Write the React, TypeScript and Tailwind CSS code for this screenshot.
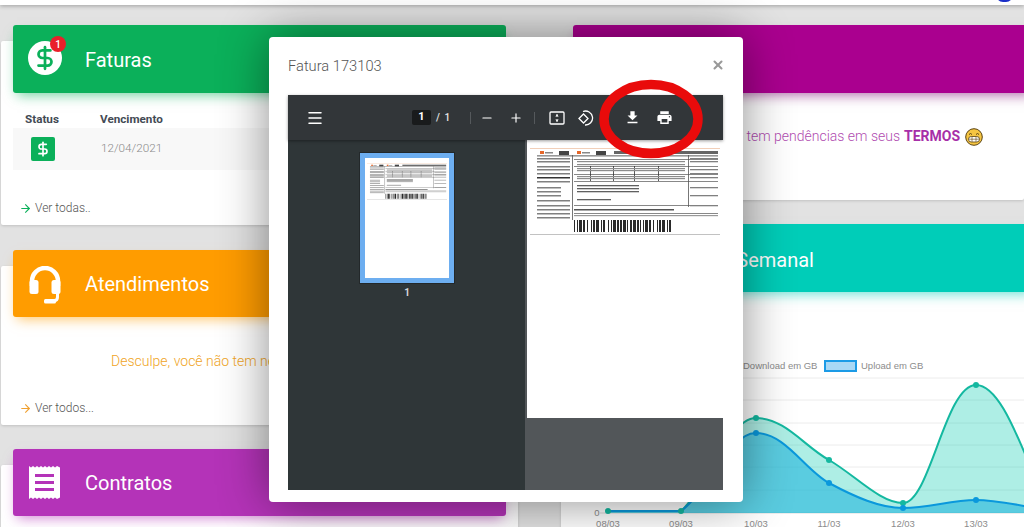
import React from 'react';
import { ArrowRight, DollarSign, Menu, Minus, Plus, X } from 'lucide-react';

const BAR_WIDTHS = [1, 2, 1, 1, 3, 1, 2, 2, 1, 3, 1, 1, 2, 1, 3, 2, 1, 1, 2, 3, 1, 2, 1, 1, 3, 1, 2, 1, 2, 1, 3, 1, 1, 2, 2, 1, 3, 1, 2, 1, 1, 2, 1, 1, 3, 1, 2, 2, 1, 3, 1, 1, 2, 1, 3, 2, 1, 1, 2, 3];

const Boleto: React.FC<{ className: string }> = ({ className }) => {
  let x = 44;
  const bars = BAR_WIDTHS.map((w, i) => {
    const bar = i % 2 === 0 ? <rect key={i} x={x} y={73} width={w} height={12} fill="#2a2a2a" /> : null;
    x += w;
    return bar;
  });
  const hLines = [12, 19, 27, 34, 58, 66];

  return (
    <svg viewBox="0 0 190 90" className={className}>
      <rect x="0" y="1" width="190" height="0.6" fill="#e8b08a" />
      <rect x="10" y="4" width="4" height="3" fill="#e5672a" />
      <rect x="15" y="5" width="8" height="1.5" fill="#888" />
      <rect x="29" y="4" width="10" height="4" fill="#444" />
      <rect x="47" y="4" width="4" height="3" fill="#e5672a" />
      <rect x="52" y="5" width="8" height="1.5" fill="#888" />
      <rect x="66" y="4" width="10" height="4" fill="#444" />
      <rect x="84" y="4" width="104" height="3" fill="#666" />
      <rect x="7" y="8.500" width="181" height="0.8" fill="#333" />
      <rect x="42" y="8" width="0.8" height="65" fill="#555" />
      <rect x="158" y="8" width="0.8" height="52" fill="#555" />
      {hLines.map((y) => (
        <rect key={y} x="44" y={y} width="144" height="0.7" fill="#555" />
      ))}
      {[60, 83, 104, 128].map((lx) => (
        <rect key={lx} x={lx} y="19" width="0.8" height="15" fill="#333" />
      ))}
      {[11, 14, 19, 22, 26, 30, 34, 40, 44, 48, 53, 58, 62, 66, 70].map((y) => (
        <rect key={y} x="7" y={y} width={y % 4 === 0 ? 24 : 33} height="1.500" fill={y === 30 ? '#333' : '#808080'} />
      ))}
      {[11, 14, 22, 26, 30, 40, 48, 58].map((y) => (
        <rect key={y} x="160" y={y} width="28" height="1.300" fill="#808080" />
      ))}
      {[14, 17, 21, 23, 29, 31].map((y) => (
        <rect key={y} x="47" y={y} width="108" height="1.200" fill="#8c8c8c" />
      ))}
      {[38, 41, 44, 52].map((y) => (
        <rect key={y} x="47" y={y} width={y === 52 ? 34 : 62} height="1.300" fill="#606060" />
      ))}
      <rect x="44" y="62" width="100" height="1.500" fill="#555" />
      <rect x="44" y="68" width="144" height="1.200" fill="#999" />
      {bars}
      <rect x="0" y="87" width="190" height="0.6" fill="#999" />
    </svg>
  );
};

const HeadsetIcon = () => (
  <svg viewBox="0 0 32 38" className="w-[32px] h-[38px]" fill="none">
    <path d="M3 20V15a13 13 0 0 1 26 0v5" stroke="#fff" strokeWidth="4.500" />
    <path d="M28.500 25v6c0 2.500-1 3.500-3 3.500H20" stroke="#fff" strokeWidth="3" />
    <rect x="0.500" y="14" width="9" height="14" rx="2.500" fill="#fff" />
    <rect x="22.500" y="14" width="9" height="14" rx="2.500" fill="#fff" />
    <rect x="15" y="33" width="12" height="4.500" rx="1.500" fill="#fff" />
  </svg>
);

const ReceiptIcon = () => (
  <svg viewBox="0 0 31 33" className="w-[31px] h-[33px]">
    <path
      fill="#fff"
      fillRule="evenodd"
      d="M0 0l2 1.500L4 0l2 1.500L8 0l2 1.500L12 0l2 1.500L16 0l2 1.500L20 0l2 1.500L24 0l2 1.500L28 0l3 1.500V31.500L28 33l-2-1.500L24 33l-2-1.500L20 33l-2-1.500L16 33l-2-1.500L12 33l-2-1.500L8 33l-2-1.500L4 33l-2-1.500L0 33zM6 8v3h19V8zM6 15v3h19v-3zM6 22v3h19v-3z"
    />
  </svg>
);

const GrinEmoji = () => (
  <svg viewBox="0 0 18 18" className="w-[18px] h-[18px] ml-[5px] shrink-0">
    <circle cx="9" cy="9" r="8.300" fill="#f5c542" stroke="#5a4210" strokeWidth="1" />
    <rect x="3.500" y="8.500" width="11" height="5.500" rx="2.700" fill="#fff" stroke="#5a4210" strokeWidth="0.800" />
    <path d="M3.500 11.200h11M7 8.700v5.200M11 8.700v5.200" stroke="#5a4210" strokeWidth="0.600" />
    <path d="M4 6.500q1.500-2 3 0M11 6.500q1.500-2 3 0" stroke="#5a4210" strokeWidth="1" fill="none" />
  </svg>
);

const Chart = () => {
  const teal = 'M608 511 L681 511 C705 490 728 418 756 418 C785 418 805 447 829 460 C855 475 880 503 903 503 C930 503 945 385 976 385 C1007 385 1030 480 1050 505';
  const blue = 'M608 511 L681 511 C705 495 728 433 756 433 C785 433 805 470 829 483 C855 497 880 508 903 508 C930 508 950 500 976 500 C1000 500 1030 508 1050 510';
  const gridY = [378, 400, 423, 445, 467, 490];
  const ticks: [string, number][] = [['08/03', 608], ['09/03', 681], ['10/03', 756], ['11/03', 829], ['12/03', 903], ['13/03', 976]];

  return (
    <svg viewBox="561 350 463 177" className="w-[463px] h-[177px] mt-[58px] block" fontFamily="Liberation Sans, sans-serif">
      <text x="743" y="369" fontSize="9.500" fill="#8c8c8c">Download em GB</text>
      <rect x="825" y="361" width="31" height="10" fill="#a9d8f5" stroke="#1c9be6" strokeWidth="2" />
      <text x="861" y="369" fontSize="9.500" fill="#8c8c8c">Upload em GB</text>
      {gridY.map((y) => (
        <line key={y} x1="600" x2="1024" y1={y} y2={y} stroke="#ececec" />
      ))}
      <line x1="600" x2="1024" y1="513" y2="513" stroke="#dcdcdc" />
      <path d={`${teal} L1050 513 L608 513 Z`} fill="#16cdb5" fillOpacity="0.35" />
      <path d={`${blue} L1050 513 L608 513 Z`} fill="#16b0dc" fillOpacity="0.55" />
      <path d={teal} fill="none" stroke="#14b8a0" strokeWidth="2" />
      <path d={blue} fill="none" stroke="#0a98dc" strokeWidth="2" />
      {[[608, 511], [681, 511], [756, 418], [829, 460], [903, 503], [976, 385]].map(([cx, cy]) => (
        <circle key={cx} cx={cx} cy={cy} r="3" fill="#14b8a0" />
      ))}
      {[[756, 433], [829, 483], [903, 508], [976, 500]].map(([cx, cy]) => (
        <circle key={cx} cx={cx} cy={cy} r="3" fill="#0a98dc" />
      ))}
      <text x="597" y="516" fontSize="9.500" fill="#8c8c8c" textAnchor="middle">0</text>
      {ticks.map(([label, tx]) => (
        <text key={label} x={tx} y="526.500" fontSize="9.500" fill="#8c8c8c" textAnchor="middle">{label}</text>
      ))}
    </svg>
  );
};

const FaturaModal = () => (
  <div className="absolute isolate left-[269px] top-[37px] w-[474px] h-[465px] bg-white rounded-[4px] px-[19px] shadow-[0_0_50px_rgba(0,0,0,0.45)]">
    <div className="h-[58px] flex items-center justify-between">
      <span className="mt-[1px] text-[14.700px] font-light text-[#555]">Fatura 173103</span>
      <X className="w-[14px] h-[14px] mb-[3px] text-[#999] mr-[-1px]" strokeWidth={3.500} />
    </div>
    <div className="w-[435px] h-[395px] flex flex-col bg-[#2f3638]">
      <div className="h-[45px] bg-[#323639] flex items-center text-white shrink-0 shadow-[0_1px_3px_rgba(0,0,0,0.4)] z-10">
        <Menu className="w-[18px] h-[18px] ml-[18px]" strokeWidth={2} />
        <div className="ml-[88px] w-[19px] h-[15px] bg-[#191b1c] rounded-[2px] text-[11px] font-bold flex items-center justify-center">1</div>
        <span className="ml-[5px] text-[10px] font-medium tracking-[1px] text-[#e8e8e8]">/ 1</span>
        <div className="ml-[19px] w-px h-[12px] bg-[#55595c]" />
        <Minus className="w-[14px] h-[14px] ml-[9px]" strokeWidth={2} />
        <Plus className="w-[14px] h-[14px] ml-[15px]" strokeWidth={2} />
        <div className="ml-[11px] w-px h-[12px] bg-[#55595c]" />
        <svg viewBox="0 0 16 16" className="w-[16px] h-[16px] ml-[14px]" fill="none" stroke="#fff" strokeWidth="1.300">
          <rect x="1" y="2" width="14" height="12" rx="1" />
          <path d="M8 4v2.500M8 9.500V12" strokeWidth="1" />
          <path d="M6.300 6.500h3.400L8 4.500zM6.300 9.500h3.400L8 11.500z" fill="#fff" stroke="none" />
        </svg>
        <svg viewBox="0 0 16 16" className="w-[16px] h-[16px] ml-[13px]" fill="none" stroke="#fff" strokeWidth="1.300">
          <path d="M5 1.500A7 7 0 1 1 7 15" />
          <path d="M1 8.500L5.500 4l4.500 4.500L5.500 13z" />
        </svg>
        <svg viewBox="0 0 24 24" className="w-[17px] h-[17px] ml-[30px]" fill="#fff">
          <path d="M19 9h-4V3H9v6H5l7 7 7-7zM5 18v2h14v-2H5z" />
        </svg>
        <svg viewBox="0 0 24 24" className="w-[17px] h-[17px] ml-[15px]" fill="#fff">
          <path d="M19 8H5c-1.660 0-3 1.340-3 3v6h4v4h12v-4h4v-6c0-1.660-1.340-3-3-3zm-3 11H8v-5h8v5zm3-7c-.55 0-1-.45-1-1s.45-1 1-1 1 .45 1 1-.45 1-1 1zm-1-9H6v4h12V3z" />
        </svg>
      </div>
      <div className="flex-1 flex min-h-0">
        <div className="w-[237px] flex flex-col items-center pt-[13px]">
          <div className="ml-[1px] w-[94px] h-[130px] bg-white border-[5px] border-[#6daef0] pt-[5px] px-[2px] shadow-[0_0_0_1px_rgba(0,0,0,0.25)]">
            <Boleto className="w-full blur-[0.3px]" />
          </div>
          <span className="mt-[2px] ml-[1px] text-[10px] font-bold text-[#d5d8d8]">1</span>
        </div>
        <div className="flex-1 bg-[#525659] flex flex-col items-end">
          <div className="w-[196px] h-[278px] bg-white pt-[7px] px-[3px]">
            <Boleto className="w-[190px] h-[90px] blur-[0.4px]" />
          </div>
        </div>
      </div>
    </div>
  </div>
);

export default function App() {
  return (
    <div className="relative w-[1024px] h-[527px] overflow-hidden bg-[#e2e2e2]" style={{ fontFamily: 'Roboto, sans-serif' }}>
      <div className="relative h-[5px] bg-white shadow-[0_1px_4px_rgba(0,0,0,0.3)]">
        <div className="absolute left-[996px] top-[-12px] w-[17px] h-[14px] rounded-full bg-[#1b2fc8]" />
      </div>

      <div className="flex pt-[36px]">
        {/* left column */}
        <div className="w-[517px] ml-px shrink-0">
          <section className="h-[184px] bg-white rounded-[2px] shadow-[0_1px_3px_rgba(0,0,0,0.15)]">
            <div className="relative -top-[16px] mx-[12px] h-[68px] bg-[#0bb05a] rounded-[3px] flex items-center shadow-[0_6px_12px_-4px_rgba(11,176,90,0.6)]">
              <div className="relative ml-[15px] mt-[-2px] w-[34px] h-[34px] rounded-full bg-white flex items-center justify-center">
                <DollarSign className="w-[26px] h-[26px] text-[#0bb05a]" strokeWidth={2.500} />
                <div className="absolute -top-[5px] -right-[4px] w-[16px] h-[16px] rounded-full bg-[#e9202a] text-white text-[10px] font-medium flex items-center justify-center">1</div>
              </div>
              <span className="ml-[23px] mt-[1px] text-[20px] text-white">Faturas</span>
            </div>
            <div className="mt-[2px] flex h-[17px] items-start text-[11.700px] font-bold text-[#434a54]">
              <span className="ml-[24px] w-[75px]">Status</span>
              <span>Vencimento</span>
            </div>
            <div className="ml-[12px] h-[42px] bg-[#f8f8f8] flex items-center">
              <div className="ml-[18px] w-[24px] h-[24px] bg-[#0bb05a] rounded-[2px] flex items-center justify-center">
                <DollarSign className="w-[16px] h-[16px] text-white" strokeWidth={2.500} />
              </div>
              <span className="ml-[46px] text-[11.700px] font-light text-[#8a8a8a]">12/04/2021</span>
            </div>
            <div className="mt-[29px] ml-[18px] flex items-center text-[12px] font-light text-[#555]">
              <ArrowRight className="w-[13px] h-[13px] text-[#0bb05a] mr-[3px]" strokeWidth={2} />
              Ver todas..
            </div>
          </section>

          <section className="mt-[41px] h-[159px] bg-white rounded-[2px] shadow-[0_1px_3px_rgba(0,0,0,0.15)]">
            <div className="relative -top-[16px] mx-[12px] h-[67px] bg-[#ff9c00] rounded-[3px] flex items-center shadow-[0_6px_12px_-4px_rgba(255,156,0,0.6)]">
              <div className="ml-[16px] mt-[2px]"><HeadsetIcon /></div>
              <span className="ml-[24px] text-[20px] text-white">Atendimentos</span>
            </div>
            <p className="mt-[18px] ml-[110px] text-[14px] font-light text-[#f0a41e] whitespace-nowrap">Desculpe, você não tem nenhum atendimento</p>
            <div className="mt-[27px] ml-[18px] flex items-center text-[12px] font-light text-[#555]">
              <ArrowRight className="w-[13px] h-[13px] text-[#f0a030] mr-[3px]" strokeWidth={2} />
              Ver todos...
            </div>
          </section>

          <section className="mt-[40px] h-[100px] bg-white rounded-[2px] shadow-[0_1px_3px_rgba(0,0,0,0.15)]">
            <div className="relative -top-[16px] mx-[12px] h-[67px] bg-[#b433b8] rounded-[3px] flex items-center shadow-[0_6px_12px_-4px_rgba(180,51,184,0.6)]">
              <div className="ml-[16px]"><ReceiptIcon /></div>
              <span className="ml-[25px] text-[20px] text-white">Contratos</span>
            </div>
          </section>
        </div>

        {/* right column */}
        <div className="w-[463px] ml-[43px] shrink-0">
          <section className="h-[159px] bg-white rounded-[2px] shadow-[0_1px_3px_rgba(0,0,0,0.15)]">
            <div className="relative -top-[16px] ml-[12px] -mr-[12px] h-[68px] bg-[#aa008f] rounded-[3px] shadow-[0_6px_12px_-4px_rgba(120,0,110,0.6)]" />
            <div className="mt-[17px] pl-[125px] flex items-center text-[14px] font-light text-[#b04bb0] whitespace-nowrap">
              Você não tem pendências em seus <b className="font-bold text-[#a72fa8] ml-[4px]">TERMOS</b>
              <GrinEmoji />
            </div>
          </section>

          <section className="mt-[40px] h-[300px] bg-white rounded-[2px] shadow-[0_1px_3px_rgba(0,0,0,0.15)]">
            <div className="relative -top-[16px] ml-[12px] -mr-[12px] h-[68px] bg-[#00cdb8] rounded-[3px] flex items-center justify-end shadow-[0_6px_12px_-4px_rgba(0,205,184,0.6)]">
              <span className="mr-[222px] mt-[3px] text-[20px] text-white">Consumo Semanal</span>
            </div>
            <div className="-mt-[16px]"><Chart /></div>
          </section>
        </div>
      </div>

      <FaturaModal />

      <svg viewBox="0 0 104 80" className="absolute left-[599px] top-[79px] w-[104px] h-[80px]" fill="none">
        <ellipse cx="52" cy="40" rx="47" ry="34.500" stroke="#e90b0b" strokeWidth="9.500" />
      </svg>
    </div>
  );
}
